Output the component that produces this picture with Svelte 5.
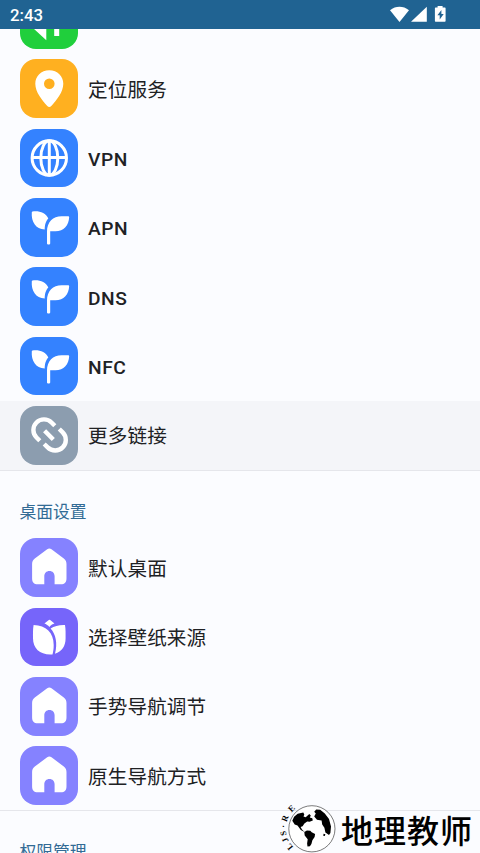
<script lang="ts">
	type Item = { label: string; icon: string; color: string; latin?: boolean; pressed?: boolean };

	const network: Item[] = [
		{ label: '移动网络', icon: 'data', color: '#20cf3c' },
		{ label: '定位服务', icon: 'pin', color: '#ffb020' },
		{ label: 'VPN', icon: 'globe', color: '#3482ff', latin: true },
		{ label: 'APN', icon: 'sprout', color: '#3482ff', latin: true },
		{ label: 'DNS', icon: 'sprout', color: '#3482ff', latin: true },
		{ label: 'NFC', icon: 'sprout', color: '#3482ff', latin: true },
		{ label: '更多链接', icon: 'link', color: '#8c9daf', pressed: true }
	];

	const desktop: Item[] = [
		{ label: '默认桌面', icon: 'home', color: '#8582ff' },
		{ label: '选择壁纸来源', icon: 'tulip', color: '#7665fa' },
		{ label: '手势导航调节', icon: 'home', color: '#8582ff' },
		{ label: '原生导航方式', icon: 'home', color: '#8582ff' }
	];

	const ring = [
		{ char: 'L', angle: -129 },
		{ char: 'J', angle: -113 },
		{ char: 'S', angle: -99 },
		{ char: '·', angle: -85 },
		{ char: 'R', angle: -69 },
		{ char: 'E', angle: -45 }
	];
</script>

{#snippet row(item: Item)}
	<li class="row" class:pressed={item.pressed}>
		<svg class="icon" viewBox="0 0 58.6 58.6" style:background={item.color} aria-hidden="true">
			{#if item.icon === 'data'}
				<path d="M23.8 12v32.6L13.2 34.8" class="line data" />
				<path d="M36.7 46V12l10.6 10" class="line data" />
			{:else if item.icon === 'pin'}
				<path fill-rule="evenodd" d="M29.3 11.2c-8.2 0-14 6-14 13.6 0 8.3 6.7 16.5 12 22.2 1.2 1.3 2.8 1.3 4 0 5.3-5.7 12-13.9 12-22.2 0-7.6-5.8-13.6-14-13.6Zm0 8.3a5.3 5.3 0 1 1 0 10.6 5.3 5.3 0 0 1 0-10.6Z" />
			{:else if item.icon === 'globe'}
				<circle cx="29.3" cy="29" r="17.2" class="line thin" />
				<ellipse cx="29.3" cy="29" rx="8.5" ry="17.2" class="line thin" />
				<path d="M12.2 28.5h34.2M29.3 11.9v34.2" class="line thin" />
			{:else if item.icon === 'sprout'}
				<path d="M12.6 13.4c7-.8 13.2 1.4 15.7 7-2.6 2.9-3.4 5.8-3.6 11.2-9-.8-13.6-7.6-12.9-17.4 0-.5.3-.8.8-.8Z" />
				<path d="M27 45.6V33.5c0-9.4 6-15.3 14.6-15.3h6.7c.6 0 .9.3.9.9-.4 8.5-5.2 14.2-13.8 14.2h-5.2v12.3c0 .5-.3.8-.8.8h-1.6c-.5 0-.8-.3-.8-.8Z" />
			{:else if item.icon === 'link'}
				<path d="m19.8 34.8-3.3-3.3a10.6 10.6 0 0 1 15-15l3.3 3.3M39.3 23l3.4 3.4a10.6 10.6 0 0 1-15 15L24.2 38M24.6 24.8l8.7 8.7" class="line" />
			{:else if item.icon === 'home'}
				<path d="M27.2 11.3c1.3-1.1 3-1.1 4.3 0l12.3 9.2c2 1.6 2.7 3.2 2.7 5.6v14.1c0 4.2-1.8 6-5.7 6h-6.2v-7.9c0-3.2-2-5.4-5.1-5.4-3.2 0-5.2 2.2-5.2 5.4v7.9h-6.5c-3.9 0-5.7-1.8-5.7-6V26.1c0-2.4.7-4 2.7-5.6Z" />
			{:else if item.icon === 'tulip'}
				<path d="M28.2 12.4c.9-.8 1.7-.8 2.6 0l3.7 3.2c-2 .7-3.8 1.8-5.1 3.3-1.3-1.4-3.1-2.6-5-3.3ZM13.6 17.1c12.5.2 20.1 7.7 20.1 20 0 3.7-.4 6.7-1.2 9.3C20.7 47.3 13 41.1 13 30.3c0-4.5-.2-8.8.6-13.2ZM30.6 20.6c3.7-2.5 8.5-3.7 14.4-3.5.8 4.4.6 8.7.6 13.2 0 8-3.9 13.5-10.6 15.5 2.7-10.3.9-19.3-4.4-25.2Z" />
			{/if}
		</svg>
		<span class="label" class:latin={item.latin}>{item.label}</span>
	</li>
{/snippet}

<div class="screen">
	<header class="status">
		<span>2:43</span>
		<svg class="signals" width="56" height="18" viewBox="0 0 56 18" aria-hidden="true">
			<path d="M0 4.2C5.8-.4 13.2-.4 19 4.2L9.5 16Z" />
			<path d="M21 15.8 36.8.8v15Z" />
			<path fill-rule="evenodd" d="M47.6 0h5v1.6h2c.6 0 1 .4 1 1v12.2c0 .6-.4 1-1 1h-8.7c-.6 0-1-.4-1-1V2.6c0-.6.4-1 1-1h1.7Zm3.8 4-4 5.3h2.3v4.2l4-5.5h-2.3Z" />
		</svg>
	</header>

	<main>
		<ul class="first">
			{#each network as item}
				{@render row(item)}
			{/each}
		</ul>
		<section>
			<h2>桌面设置</h2>
			<ul>
				{#each desktop as item}
					{@render row(item)}
				{/each}
			</ul>
		</section>
		<section>
			<h2>权限管理</h2>
		</section>
	</main>

	<svg class="watermark" width="202" height="50" viewBox="0 0 202 50" aria-hidden="true">
		<circle cx="33.9" cy="25.8" r="23.1" class="orbit" />
		<path d="m14.3 17.7 1.8-4 3.6-3 5.6-1.3 1 2.2-.8 2 2.2.6 3.6-3.2 1.5 1.5-1 2 2.5.8.5 2.2-3.2 1.2-2.4-.2-2.8 2-1.8 2.8-2 .8 1.4 2.5 2.6 2.4-3.8-2-3.3-4.4-2.8-1.2Z" />
		<path d="m26.3 28.9 2.6-1.5 3.4.3 1.4 1.6 3.4 1.8-.5 3-2.2 3.2-1 3.6-1.5 2.3-2.4.4-.4-3.2.6-4.2-3-3.6Z" />
		<path d="m36.2 8.8 2-2.3 4 .2 4.6 3.8 4.2 5.6 2 7.4-.6 6.4-1.4 2-3.6-2.5-1-4.6-2.2-3.4-.6-4-4.6-.6-2.8-3.4 1.6-2.8ZM45.6 30.8l1.8.4-.6 1.9-1.6-.4Z" />
		{#each ring as mark}
			<text class="mark" x="33.9" y="-.2" transform="rotate({mark.angle} 33.9 25.8)">{mark.char}</text>
		{/each}
		<text class="brand" x="63" y="40" textLength="131">地理教师</text>
	</svg>
</div>

<style>
	:global(body) {
		margin: 0;
	}

	.screen {
		position: relative;
		display: flex;
		flex-direction: column;
		height: 853px;
		overflow: hidden;
		background: #fbfcff;
		color: #202124;
		font-family: Roboto, 'Noto Sans CJK SC', sans-serif;
	}

	.status {
		display: flex;
		flex: none;
		align-items: center;
		justify-content: space-between;
		height: 29px;
		padding: 0 34px 0 10px;
		box-sizing: border-box;
		background: #206392;
		color: #fff;
		font-size: 16.8px;
		font-weight: 500;
		line-height: 29px;
	}

	.status span {
		padding-top: 2px;
	}

	.signals {
		fill: #fff;
	}

	main {
		flex: 1;
		min-height: 0;
		overflow: hidden;
	}

	ul {
		margin: 0;
		padding: 0;
		list-style: none;
	}

	.first {
		margin-top: -44.4px;
	}

	.row {
		display: flex;
		align-items: center;
		gap: 10px;
		height: 69.35px;
		padding-left: 19.5px;
	}

	.pressed {
		background: #f4f5f9;
	}

	.icon {
		flex: none;
		width: 58.6px;
		height: 58.6px;
		border-radius: 16px;
		fill: #fff;
	}

	.line {
		fill: none;
		stroke: #fff;
		stroke-width: 4.4;
	}

	.thin {
		stroke-width: 3;
	}

	.data {
		stroke-width: 5;
	}

	.label {
		padding-top: 4px;
		font-size: 19.6px;
		font-weight: 400;
		line-height: 28px;
		letter-spacing: 0.1px;
	}

	.latin {
		font-size: 19.2px;
		font-weight: 500;
		letter-spacing: 0.5px;
	}

	section {
		border-top: 1.5px solid #e5e6eb;
	}

	h2 {
		height: 62px;
		margin: 0;
		padding: 29px 0 0 19.5px;
		box-sizing: border-box;
		color: #326b95;
		font-size: 16.8px;
		font-weight: 400;
		line-height: 24px;
	}

	.watermark {
		position: absolute;
		top: 803px;
		left: 278px;
	}

	.orbit {
		fill: #fff;
		stroke: #222;
		stroke-width: 0.6;
	}

	.mark {
		font: bold 8.5px 'Liberation Serif', serif;
		text-anchor: middle;
	}

	.brand {
		font: 500 32px 'Noto Sans CJK SC', sans-serif;
	}
</style>
